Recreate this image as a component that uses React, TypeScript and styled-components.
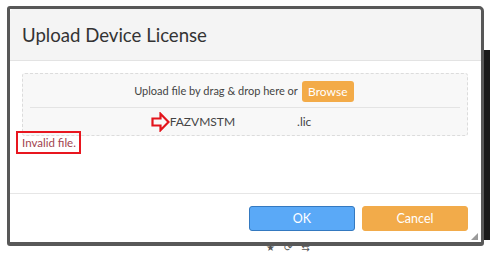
import React from "react";
import styled, { createGlobalStyle } from "styled-components";

const GlobalStyle = createGlobalStyle`
  html, body {
    margin: 0;
    padding: 0;
    background: #ffffff;
    height: 256px;
    overflow: hidden;
  }
  body {
    font-family: Lato, "Open Sans", Arial, sans-serif;
  }
`;

const Page = styled.div`
  display: flex;
  align-items: flex-start;
  padding: 6px 0 0 7px;
`;

const Frame = styled.div`
  width: 471px;
  height: 233px;
  border: 3px solid #585858;
  border-bottom-width: 4px;
  border-radius: 3px 5px 3px 3px;
  background: #ffffff;
  overflow: hidden;
  display: flex;
  flex-direction: column;
  position: relative;
`;

const SideStrip = styled.div`
  width: 6px;
  height: 190px;
  margin-top: 44px;
  background: #1a1a1a;
`;

const Header = styled.div`
  height: 51px;
  flex-shrink: 0;
  background: #f4f4f4;
  border-bottom: 1px solid #e3e3e3;
  display: flex;
  align-items: center;
  padding-left: 12px;
  border-radius: 4px 4px 0 0;
`;

const Title = styled.h1`
  margin: 0;
  font-size: 18.6px;
  font-weight: 400;
  color: #333333;
`;

const Body = styled.div`
  height: 133px;
  flex-shrink: 0;
  padding: 12px 13px 0 12px;
  box-sizing: border-box;
  border-bottom: 1px solid #e6e6e6;
`;

const DropZone = styled.div`
  height: 63px;
  box-sizing: border-box;
  background: #f8f8f8;
  border: 1px dashed #dcdcdc;
  border-radius: 3px;
  display: flex;
  flex-direction: column;
  padding: 0 7px;
`;

const DropRow = styled.div<{ $height: number; $divider?: boolean }>`
  height: ${(p) => p.$height}px;
  display: flex;
  align-items: center;
  justify-content: center;
  font-size: 12px;
  color: #444444;
  border-bottom: ${(p) => (p.$divider ? "1px solid #e4e4e4" : "none")};
`;

const Hint = styled.span`
  font-size: 11px;
  margin-left: -2px;
`;

const BrowseButton = styled.button`
  margin-left: 4px;
  width: 52px;
  height: 21px;
  border: none;
  border-radius: 3px;
  background: #f3ab48;
  color: #ffffff;
  font-family: inherit;
  font-size: 12px;
  padding: 0;
  margin-top: 2px;
`;

const FileName = styled.span`
  display: flex;
  align-items: center;
  margin-left: -28px;
`;

const FileExt = styled.span`
  margin-left: 62px;
`;

const ErrorLine = styled.div`
  margin-top: -5px;
  margin-left: -6px;
`;

const ErrorText = styled.span`
  display: inline-block;
  font-size: 11.5px;
  color: #a1444f;
  padding: 3px 3px 3px 4px;
  border: 2px solid #e8161f;
`;

const Footer = styled.div`
  flex: 1;
  display: flex;
  justify-content: flex-end;
  align-items: flex-start;
  gap: 7px;
  padding: 12px 13px 0 0;
`;

const ActionButton = styled.button<{ $variant: "primary" | "warning" }>`
  width: 106px;
  height: 25px;
  border-radius: 3px;
  font-family: inherit;
  font-size: 12.5px;
  color: #ffffff;
  padding: 0;
  background: ${(p) => (p.$variant === "primary" ? "#5aa9f7" : "#f2ab4a")};
  border: 1px solid ${(p) => (p.$variant === "primary" ? "#3479c0" : "#f2ab4a")};
`;

const Grip = styled.svg`
  position: absolute;
  right: 3px;
  bottom: 2px;
`;

const Toolbar = styled.div`
  display: flex;
  gap: 9px;
  padding-left: 266px;
  margin-top: -4px;
  font-size: 10px;
  color: #555555;
  font-family: "DejaVu Sans", sans-serif;
`;

function Arrow() {
  return (
    <svg width="19" height="20" viewBox="0 0 19 20">
      <path
        d="M1.5 6.5 H9.5 V1.8 L17.5 10 L9.5 18.2 V13.5 H1.5 Z"
        fill="none"
        stroke="#e3141c"
        strokeWidth="2.2"
        strokeLinejoin="miter"
      />
    </svg>
  );
}

export default function App() {
  return (
    <>
      <GlobalStyle />
      <Page>
        <Frame>
          <Header>
            <Title>Upload Device License</Title>
          </Header>
          <Body>
            <DropZone>
              <DropRow $height={34} $divider>
                <Hint>Upload file by drag &amp; drop here or</Hint>
                <BrowseButton>Browse</BrowseButton>
              </DropRow>
              <DropRow $height={27}>
                <FileName>
                  <Arrow />
                  FAZVMSTM
                </FileName>
                <FileExt>.lic</FileExt>
              </DropRow>
            </DropZone>
            <ErrorLine>
              <ErrorText>Invalid file.</ErrorText>
            </ErrorLine>
          </Body>
          <Footer>
            <ActionButton $variant="primary">OK</ActionButton>
            <ActionButton $variant="warning">Cancel</ActionButton>
          </Footer>
          <Grip width="7" height="7" viewBox="0 0 7 7">
            <path d="M7 0 L7 7 L0 7 Z" fill="#9a9a9a" />
          </Grip>
        </Frame>
        <SideStrip />
      </Page>
      <Toolbar>
        <span>★</span>
        <span>⟳</span>
        <span>⇆</span>
      </Toolbar>
    </>
  );
}
